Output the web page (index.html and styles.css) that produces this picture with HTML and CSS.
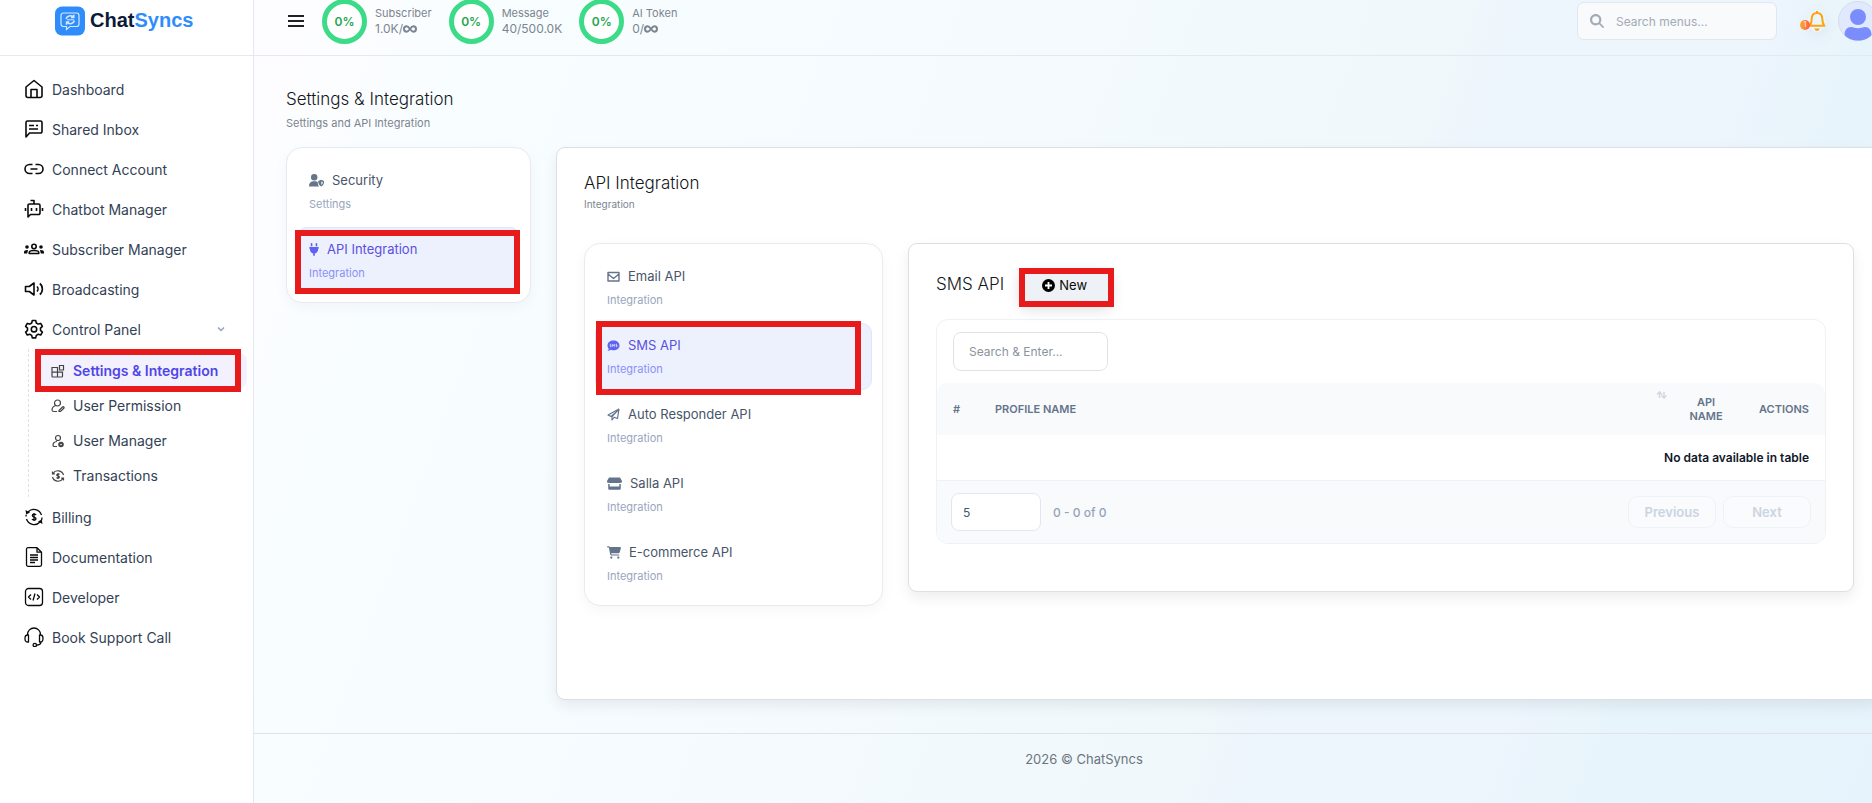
FILE: index.html
```html
<!DOCTYPE html>
<html lang="en">

<head>
    <meta charset="UTF-8">
    <meta name="viewport" content="width=device-width, initial-scale=1.0">
    <title>Settings &amp; Integration - ChatSyncs</title>
    <link rel="stylesheet" href="styles.css">
</head>

<body>
    <div class="app">
        <aside class="sidebar">
            <a class="brand" href="#">
                <svg class="brand-icon" viewBox="0 0 30 30">
                    <rect x="0" y="0.500" width="30" height="29" rx="7" fill="#2f8dfb" />
                    <path d="M8.500 7h13a2.500 2.500 0 0 1 2.500 2.500v8.500a2.500 2.500 0 0 1-2.500 2.500H15l-3.500 3v-3H8.500A2.500 2.500 0 0 1 6 18V9.500A2.500 2.500 0 0 1 8.500 7z" fill="none" stroke="#d4e8ff" stroke-width="1.200" />
                    <path d="M11 13a4.500 4 0 0 1 7.500-2M18.800 8.800v2.700H16M19.500 14.500a4.500 4 0 0 1-7.500 2M11.500 18.700V16h2.800" fill="none" stroke="#d4e8ff" stroke-width="1.500" />
                    <path d="M12 13.800h7" stroke="#d4e8ff" stroke-width="1" />
                </svg>
                <span class="brand-name">Chat<span class="brand-accent">Syncs</span></span>
            </a>
            <nav class="menu">
                <a class="menu-item" href="#">
                    <svg class="menu-icon" viewBox="0 0 20 20"><path d="M2 8l8-6.500L18 8v8.500a2 2 0 0 1-2 2H4a2 2 0 0 1-2-2zM7 18.500v-8h6v8" /></svg>
                    Dashboard
                </a>
                <a class="menu-item" href="#">
                    <svg class="menu-icon" viewBox="0 0 20 20"><path d="M2 18V3.500A1.500 1.500 0 0 1 3.500 2h13A1.500 1.500 0 0 1 18 3.500v9a1.500 1.500 0 0 1-1.500 1.500H5.500zM5 6.500h5M5 10h9M12 6.500h2" /></svg>
                    Shared Inbox
                </a>
                <a class="menu-item" href="#">
                    <svg class="menu-icon" viewBox="0 0 20 20"><path d="M8.500 14.500h-3a4.500 4.500 0 0 1 0-9h3M11.500 5.500h3a4.500 4.500 0 0 1 0 9h-3M6.500 10h7" /></svg>
                    Connect Account
                </a>
                <a class="menu-item" href="#">
                    <svg class="menu-icon" viewBox="0 0 20 20"><path d="M4 18V6.500A1.500 1.500 0 0 1 5.500 5h9A1.500 1.500 0 0 1 16 6.500V14a1.500 1.500 0 0 1-1.500 1.500H6.500zM10 5V1.500H6.500M1.500 9v3M18.500 9v3M7.500 9v3M12.500 9v3" /></svg>
                    Chatbot Manager
                </a>
                <a class="menu-item" href="#">
                    <svg class="menu-icon" viewBox="0 0 20 20">
                        <g class="fill"><circle cx="3" cy="8" r="1.800" /><circle cx="17" cy="8" r="1.800" /><path d="M0 14.500v-1.500c0-1.500 2-2.300 4-2l-.8 3.500zM20 14.500v-1.500c0-1.500-2-2.300-4-2l.8 3.500z" /></g>
                        <circle cx="10" cy="7.500" r="2.200" /><path d="M5.200 14.500v-.8c0-3 9.600-3 9.600 0v.8z" />
                    </svg>
                    Subscriber Manager
                </a>
                <a class="menu-item" href="#">
                    <svg class="menu-icon" viewBox="0 0 20 20"><path d="M1.500 7.500h3.800L10 4v12l-4.700-3.500H1.500zM13 7.500c1.300 1.300 1.300 3.700 0 5M15.800 4.500c3.400 2.500 3.400 8.500 0 11" /></svg>
                    Broadcasting
                </a>
                <a class="menu-item" href="#">
                    <svg class="menu-icon" viewBox="0 0 20 20"><path d="M8.300 1.500h3.400l.6 2.500 1.900 1.100 2.500-.7 1.700 2.900-1.900 1.800v2.200l1.900 1.800-1.700 2.900-2.500-.7-1.900 1.100-.6 2.500H8.300l-.6-2.500-1.900-1.100-2.500.7-1.700-2.900 1.900-1.800V9.100L1.600 7.300l1.700-2.900 2.500.7L7.700 4z" /><circle cx="10" cy="10.200" r="2.700" /></svg>
                    Control Panel
                    <svg class="chevron" viewBox="0 0 8 6"><path d="M1 1.500l3 3 3-3" /></svg>
                </a>
                <div class="submenu">
                    <a class="submenu-item active" href="#">
                        <svg class="submenu-icon" viewBox="0 0 14 14"><path d="M1 3.500h5.500V13H1.800A.8.8 0 0 1 1 12.200zM1 8.200h10.500v4a.8.800 0 0 1-.8.800H6.500M8.500 1.500h4V6h-4z" /></svg>
                        Settings &amp; Integration
                        <span class="mark mark-menu"></span>
                    </a>
                    <a class="submenu-item" href="#">
                        <svg class="submenu-icon" viewBox="0 0 14 14"><circle cx="6.500" cy="4" r="3" /><path d="M4.500 6.500c-2 .8-3.500 2.500-3.500 4.500 0 1 1 1.500 2 1.500h3M8 11.500l3.500-3.500c1-.8 2 .3 1.300 1.300L9.500 12.500H8z" /></svg>
                        User Permission
                    </a>
                    <a class="submenu-item" href="#">
                        <svg class="submenu-icon" viewBox="0 0 14 14"><circle cx="7" cy="4" r="2.500" /><path d="M6 7.500c-2.500.3-4 1.800-4 3.700 0 .8.800 1.300 1.500 1.300H6" /><circle cx="10" cy="10.500" r="1.800" stroke-width="2" /></svg>
                        User Manager
                    </a>
                    <a class="submenu-item" href="#">
                        <svg class="submenu-icon" viewBox="0 0 14 14"><path d="M2 4.500A5.800 5.800 0 0 1 12.500 6M12 9.500A5.800 5.800 0 0 1 1.500 8M1.500 2.500v2.300h2.300M12.500 11.500V9.200h-2.300M8.500 5.500C7.500 4.500 5.500 5 5.700 6.200s2.700.6 2.700 1.900-2 1.500-3 .5M7 4v6" /></svg>
                        Transactions
                    </a>
                </div>
                <a class="menu-item" href="#">
                    <svg class="menu-icon thin" viewBox="0 0 20 20"><path d="M4 5A8 8 0 0 1 17.500 8M18 10.500a8 8 0 0 1-.7 3M16 15A8 8 0 0 1 2.500 12M2 9.500a8 8 0 0 1 .3-1.700M12 8c-.6-1.200-3.700-1.200-3.700.5S12 10 12 11.700s-3.200 1.800-4 .3M10 6v8" /><path class="fill" d="M1.500 3l.7 4.500L6 5.500zM18.500 17l-.7-4.500-3.800 2z" /></svg>
                    Billing
                </a>
                <a class="menu-item" href="#">
                    <svg class="menu-icon thin" viewBox="0 0 20 20"><path d="M13 .7H4A1.500 1.500 0 0 0 2.500 2.200v15.600A1.500 1.500 0 0 0 4 19.300h12a1.500 1.500 0 0 0 1.500-1.500V5.200zM13 .7v4.500h4.500M6 8h8M6 10.500h8M6 13h8M6 15.500h5" /></svg>
                    Documentation
                </a>
                <a class="menu-item" href="#">
                    <svg class="menu-icon thin" viewBox="0 0 20 20"><rect x="1.500" y="1.500" width="17" height="17" rx="3" /><path d="M7 7.500L4.500 10 7 12.500M13 7.500l2.500 2.500-2.500 2.500M11 6.500L9 13.500" /></svg>
                    Developer
                </a>
                <a class="menu-item" href="#">
                    <svg class="menu-icon thin" viewBox="0 0 20 20"><path d="M3.500 8V7.500a6.500 6.500 0 0 1 13 0V8M4.500 8v7H3.500C1.500 15 1 13.500 1 11.500S1.500 8 3.500 8zM15.500 8v7h1c2 0 2.500-1.500 2.500-3.500S18.500 8 16.500 8zM17 15c0 2.300-1.500 3-4.500 3" /><circle cx="10.800" cy="18" r="1.700" /></svg>
                    Book Support Call
                </a>
            </nav>
        </aside>

        <div class="page">
            <header class="topbar">
                <button class="hamburger" type="button" aria-label="Toggle menu"><span></span><span></span><span></span></button>
                <div class="stats">
                    <div class="stat">
                        <div class="ring">0%</div>
                        <div class="stat-text">Subscriber<br><span class="stat-value">1.0K/<svg class="infinity" viewBox="0 0 14 8"><path d="M7 4C5.500 2 4.800 1.300 3.700 1.300a2.700 2.700 0 0 0 0 5.400C4.800 6.700 5.500 6 7 4s2.200-2.700 3.300-2.700a2.700 2.700 0 0 1 0 5.400C9.200 6.700 8.500 6 7 4z" /></svg></span></div>
                    </div>
                    <div class="stat">
                        <div class="ring">0%</div>
                        <div class="stat-text">Message<br><span class="stat-value">40/500.0K</span></div>
                    </div>
                    <div class="stat">
                        <div class="ring">0%</div>
                        <div class="stat-text">AI Token<br><span class="stat-value">0/<svg class="infinity" viewBox="0 0 14 8"><path d="M7 4C5.500 2 4.800 1.300 3.700 1.300a2.700 2.700 0 0 0 0 5.400C4.800 6.700 5.500 6 7 4s2.200-2.700 3.300-2.700a2.700 2.700 0 0 1 0 5.400C9.200 6.700 8.500 6 7 4z" /></svg></span></div>
                    </div>
                </div>
                <label class="menu-search">
                    <svg viewBox="0 0 512 512"><path d="M416 208c0 45.900-14.900 88.300-40 122.700L502.600 457.400c12.500 12.500 12.500 32.800 0 45.300s-32.800 12.500-45.300 0L330.700 376c-34.400 25.200-76.800 40-122.700 40C93.100 416 0 322.900 0 208S93.100 0 208 0S416 93.100 416 208zM208 336a128 128 0 1 0 0-256 128 128 0 1 0 0 256z" /></svg>
                    <input type="text" placeholder="Search menus..." aria-label="Search menus">
                </label>
                <button class="bell" type="button" aria-label="Notifications">
                    <svg viewBox="0 0 18 22"><path d="M9 3c-3.500 0-5.300 2.500-5.300 6 0 3.500-.7 5-2 6.800h14.600c-1.300-1.800-2-3.300-2-6.800 0-3.500-1.800-6-5.300-6zM9 3V1" fill="none" stroke="#ffa40b" stroke-width="2" stroke-linejoin="round" /><path d="M6.500 18.500h5a2.500 2.500 0 0 1-5 0z" fill="#ffa40b" /></svg>
                    <span class="bell-count">1</span>
                </button>
                <svg class="avatar" viewBox="0 0 40 40">
                    <circle cx="20" cy="20" r="19.500" fill="#e0e9fe" stroke="#d5dce8" />
                    <circle cx="20" cy="16" r="8" fill="#7b8dfd" />
                    <path d="M6.500 34c0-5 2.500-8 6.500-8 2.500 0 4 1.300 7 1.300s4.500-1.300 7-1.300c4 0 6.500 3 6.500 8-3.500 4-8 5.500-13.500 5.500S10 38 6.500 34z" fill="#7b8dfd" />
                </svg>
            </header>

            <main class="content">
                <h1 class="title">Settings &amp; Integration</h1>
                <p class="subtitle">Settings and API Integration</p>

                <div class="columns">
                    <div class="tabs">
                        <a class="tab" href="#">
                            <span class="tab-title">
                                <svg class="tab-icon wide" viewBox="0 0 15 13"><circle cx="5.200" cy="3.200" r="3.200" /><path d="M0 12.500c0-3 1.500-5.200 4-5.200h2.500c1 0 1.800.4 2.300 1 0 1.700.3 3 1.200 4.200zM12.200 5.800l3 1.200c0 2.500-.8 4.300-3 5.500-2.200-1.200-3-3-3-5.500z" /><path d="M12.300 7.500l1.500.6c0 1.300-.5 2.200-1.500 2.900z" fill="#fff" /></svg>
                                Security
                            </span>
                            <span class="tab-sub">Settings</span>
                        </a>
                        <a class="tab active" href="#">
                            <span class="tab-title">
                                <svg class="tab-icon narrow" viewBox="0 0 384 512"><path d="M96 0C78.300 0 64 14.300 64 32v96h64V32c0-17.700-14.300-32-32-32zM288 0c-17.700 0-32 14.300-32 32v96h64V32c0-17.700-14.300-32-32-32zM32 160c-17.700 0-32 14.300-32 32s14.300 32 32 32v32c0 77.400 55 142 128 156.800V480c0 17.700 14.300 32 32 32s32-14.300 32-32V412.800C297 398 352 333.400 352 256V224c17.700 0 32-14.300 32-32s-14.300-32-32-32H32z" /></svg>
                                API Integration
                            </span>
                            <span class="tab-sub">Integration</span>
                            <span class="mark mark-tab"></span>
                        </a>
                    </div>

                    <section class="card panel">
                        <h2 class="title">API Integration</h2>
                        <p class="subtitle small">Integration</p>

                        <div class="columns">
                            <div class="tabs tabs-wide">
                                <a class="tab" href="#">
                                    <span class="tab-title">
                                        <svg class="tab-icon" viewBox="0 0 13 13"><path d="M1 2.500h11v8.500H1zM1 4l5.500 4.500L12 4" fill="none" stroke="#64748b" stroke-width="1.400" stroke-linejoin="round" /></svg>
                                        Email API
                                    </span>
                                    <span class="tab-sub">Integration</span>
                                </a>
                                <a class="tab active" href="#">
                                    <span class="tab-title">
                                        <svg class="tab-icon" viewBox="0 0 13 13"><path d="M6.500 1.500c3.400 0 6 2.100 6 4.900s-2.600 4.900-6 4.900c-1 0-1.800-.1-2.600-.5-.9.700-2 1.100-3.400 1.200.7-.7 1.100-1.400 1.300-2.200C1 8.900.5 7.700.5 6.400c0-2.800 2.600-4.900 6-4.900z" /><path d="M4.300 5.300H3.200v1.200h1v1.200H3M5.600 7.800V5.300l.9 1.500.9-1.500v2.500M10 5.300H9v1.200h1v1.200H8.800" fill="none" stroke="#fff" stroke-width=".6" /></svg>
                                        SMS API
                                    </span>
                                    <span class="tab-sub">Integration</span>
                                    <span class="mark mark-sms"></span>
                                </a>
                                <a class="tab" href="#">
                                    <span class="tab-title">
                                        <svg class="tab-icon" viewBox="0 0 13 13"><path d="M12 1L1 7l3 1.500L10.500 3M12 1l-1.500 9.500-4-1.500M12 1L5 8.700V12l2-2.500" fill="none" stroke="#64748b" stroke-width="1.200" stroke-linejoin="round" /></svg>
                                        Auto Responder API
                                    </span>
                                    <span class="tab-sub">Integration</span>
                                </a>
                                <a class="tab" href="#">
                                    <span class="tab-title">
                                        <svg class="tab-icon wide" viewBox="0 0 15 13"><path d="M2 .5h11l2 3.500c.3 1.300-.8 2-1.700 2H1.700C.8 6-.3 5.300 0 4zM1.200 7h1.500v2.500h9.600V7h1.500v4.500a1.200 1.200 0 0 1-1.200 1.200H2.400a1.200 1.200 0 0 1-1.200-1.200z" /></svg>
                                        Salla API
                                    </span>
                                    <span class="tab-sub">Integration</span>
                                </a>
                                <a class="tab" href="#">
                                    <span class="tab-title">
                                        <svg class="tab-icon cart" viewBox="0 0 576 512"><path d="M0 24C0 10.700 10.700 0 24 0H69.500c22 0 41.500 12.800 50.600 32h411c26.300 0 45.500 25 38.600 50.400l-41 152.300c-8.500 31.400-37 53.300-69.500 53.300H170.700l5.400 28.500c2.200 11.300 12.100 19.500 23.600 19.500H488c13.300 0 24 10.700 24 24s-10.700 24-24 24H199.700c-34.600 0-64.300-24.600-70.700-58.500L77.400 54.500c-.7-3.800-4-6.500-7.900-6.500H24C10.700 48 0 37.300 0 24zM128 464a48 48 0 1 1 96 0 48 48 0 1 1 -96 0zm336-48a48 48 0 1 1 0 96 48 48 0 1 1 0-96z" /></svg>
                                        E-commerce API
                                    </span>
                                    <span class="tab-sub">Integration</span>
                                </a>
                            </div>

                            <section class="card sms">
                                <div class="sms-head">
                                    <h3 class="title">SMS API</h3>
                                    <button class="btn-new" type="button">
                                        <svg viewBox="0 0 13 13"><circle cx="6.500" cy="6.500" r="6.500" /><path d="M6.500 3v7M3 6.500h7" stroke="#fff" stroke-width="1.800" /></svg>
                                        New
                                        <span class="mark mark-new"></span>
                                    </button>
                                </div>
                                <div class="table-box">
                                    <div class="table-tools">
                                        <input class="table-search" type="text" placeholder="Search &amp; Enter..." aria-label="Search and enter">
                                    </div>
                                    <table class="table">
                                        <thead>
                                            <tr>
                                                <th class="col-num">#</th>
                                                <th class="col-name">Profile Name
                                                    <svg class="sort" viewBox="0 0 11 8"><path d="M1 3.500L3.500 1v6M3.500 1L6 3.500M5.500 4.500L8 7V1M8 7l2.500-2.500" /></svg>
                                                </th>
                                                <th class="col-api">API Name</th>
                                                <th class="col-actions">Actions</th>
                                            </tr>
                                        </thead>
                                        <tbody>
                                            <tr>
                                                <td colspan="4">No data available in table</td>
                                            </tr>
                                        </tbody>
                                    </table>
                                    <div class="table-foot">
                                        <select class="page-size" aria-label="Rows per page">
                                            <option>5</option>
                                            <option>10</option>
                                            <option>25</option>
                                        </select>
                                        <span class="range">0 - 0 of 0</span>
                                        <button class="pager" type="button" disabled>Previous</button>
                                        <button class="pager" type="button" disabled>Next</button>
                                    </div>
                                </div>
                            </section>
                        </div>
                    </section>
                </div>
            </main>

            <footer class="footer">2026 © ChatSyncs</footer>
        </div>
    </div>
</body>

</html>
```
FILE: styles.css
```css
* {
    box-sizing: border-box;
}

body {
    margin: 0;
    font-family: Inter, "Open Sans", sans-serif;
    font-size: 14px;
    color: #212529;
    overflow: hidden;
}

a {
    color: inherit;
    text-decoration: none;
}

button,
input,
select {
    font-family: inherit;
}

h1,
h2,
h3,
p {
    margin: 0;
}

/* the page is a little wider than the window */
.app {
    display: flex;
    width: calc(100% + 42px);
    min-height: 100vh;
    background: linear-gradient(110deg, #fdfdff 14%, #f8fdff 22%, #f6fbff 40%, #f0f8fb 66%, #edf5fd 70%, #edf5fd 80%, #e8f4fb 85%, #e6f3fc 100%);
}

/* sidebar */
.sidebar {
    flex: 0 0 254px;
    background: #fff;
    border-right: 1px solid #e5e9ef;
}

.brand {
    display: flex;
    align-items: center;
    gap: 5px;
    height: 56px;
    padding: 0 0 14px 55px;
    border-bottom: 1px solid #e5e9ef;
}

.brand-icon {
    width: 30px;
    height: 30px;
}

.brand-name {
    font-family: "Liberation Sans", sans-serif;
    font-size: 20px;
    font-weight: bold;
    color: #0b1a38;
}

.brand-accent {
    color: #2f8dfb;
}

.menu {
    padding-top: 13px;
}

.menu-item {
    display: flex;
    align-items: center;
    gap: 8px;
    height: 40px;
    padding: 0 28px 0 24px;
    color: #334155;
}

.menu-icon {
    width: 20px;
    height: 20px;
    fill: none;
    stroke: #0a0a0a;
    stroke-width: 1.6;
    stroke-linejoin: round;
}

.menu-icon.thin {
    stroke-width: 1.3;
}

.menu-icon .fill {
    fill: #0a0a0a;
    stroke: none;
}

.chevron {
    width: 8px;
    height: 6px;
    margin-left: auto;
    fill: none;
    stroke: #94a3b8;
    stroke-width: 1.5;
}

.submenu {
    margin-left: 28px;
    padding: 4px 6px 4px 8px;
    border-left: 1px dashed #dbe2ea;
}

.submenu-item {
    position: relative;
    display: flex;
    align-items: center;
    gap: 8px;
    height: 35px;
    padding-left: 14px;
    border-radius: 8px;
    color: #334155;
}

.submenu-item.active {
    background: #f4f1fe;
    color: #4f46e5;
    font-weight: 600;
}

.submenu-icon {
    width: 14px;
    height: 14px;
    fill: none;
    stroke: #444;
    stroke-width: 1.2;
}

/* red highlight frames */
.mark {
    position: absolute;
    border: 6px solid #e71b1b;
    pointer-events: none;
}

.mark-menu {
    inset: -4px 6px -4px -2px;
}

.mark-tab {
    inset: 2px -1px -1px -3px;
}

.mark-sms {
    inset: -3px 10px -6px 0;
}

.mark-new {
    inset: 0 -2px -1px 0;
}

/* top bar */
.page {
    flex: 1;
    min-width: 0;
    display: flex;
    flex-direction: column;
}

.topbar {
    display: flex;
    align-items: center;
    height: 56px;
    padding: 0 36px 13px 34px;
    border-bottom: 1px solid #e3e9f0;
}

.hamburger {
    display: flex;
    flex-direction: column;
    gap: 3px;
    width: 16px;
    padding: 0;
    border: 0;
    background: none;
}

.hamburger span {
    height: 2px;
    background: #222;
}

.stats {
    display: flex;
    gap: 17px;
    margin-left: 18px;
}

.stat {
    display: flex;
    align-items: center;
    gap: 8px;
}

.ring {
    display: flex;
    align-items: center;
    justify-content: center;
    width: 45px;
    height: 45px;
    border: 5px solid #3bdb87;
    border-radius: 50%;
    background: #fff;
    color: #22a652;
    font-size: 12px;
    font-weight: 600;
}

.stat-text {
    font-size: 11px;
    line-height: 16px;
    color: #7c858f;
}

.stat-value {
    font-size: 12px;
}

.infinity {
    width: 14px;
    height: 8px;
    fill: none;
    stroke: #7c858f;
    stroke-width: 2;
}

.menu-search {
    display: flex;
    align-items: center;
    gap: 12px;
    width: 200px;
    height: 38px;
    margin-left: auto;
    padding: 0 12px;
    border: 1px solid #e1e6f0;
    border-radius: 7px;
    background: #f8fafc;
}

.menu-search svg {
    flex: none;
    width: 14px;
    height: 14px;
    fill: #a3abb7;
}

.menu-search input {
    width: 100%;
    padding: 0;
    border: 0;
    outline: none;
    background: none;
    font-size: 12px;
    color: #334155;
}

.menu-search input::placeholder {
    color: #a3abb7;
}

.bell {
    position: relative;
    width: 18px;
    height: 22px;
    margin: 0 12px 0 31px;
    padding: 0;
    border: 0;
    border-radius: 50%;
    background: none;
    box-shadow: 0 4px 14px rgba(100, 116, 139, 0.1);
}

.bell svg {
    width: 18px;
    height: 22px;
}

.bell-count {
    position: absolute;
    left: -8px;
    bottom: 2px;
    width: 10px;
    height: 10px;
    border-radius: 50%;
    background: linear-gradient(90deg, #f9ad2b, #fd5b4c);
    color: #fff;
    font-size: 7px;
    line-height: 10px;
}

.avatar {
    flex: none;
    width: 40px;
    height: 40px;
}

/* content */
.content {
    flex: 1;
    padding: 32px 32px 33px;
}

.title {
    font-size: 17px;
    font-weight: 300;
    line-height: 22px;
    color: #14171b;
}

.subtitle {
    margin-top: 5px;
    font-size: 11px;
    line-height: 16px;
    color: #7c858f;
}

.subtitle.small {
    margin-top: 2px;
    font-size: 10px;
}

.columns {
    display: flex;
    align-items: flex-start;
    gap: 25px;
    margin-top: 16px;
}

.panel .columns {
    margin-top: 31px;
}

.tabs {
    flex: 0 0 245px;
    display: flex;
    flex-direction: column;
    gap: 2px;
    padding: 10px 10px 8px;
    border: 1px solid #e7ebf1;
    border-radius: 16px;
    background: #fff;
    box-shadow: 0 4px 14px rgba(15, 23, 42, 0.04);
}

.tabs-wide {
    flex-basis: 299px;
}

.tab {
    position: relative;
    height: 67px;
    padding: 12px 11px;
    border: 1px solid transparent;
    border-radius: 10px;
    color: #475569;
}

.tab.active {
    border-color: #e0e5fd;
    background: #edf1fe;
    color: #5a4fe0;
}

.tab-title {
    display: flex;
    align-items: center;
    gap: 8px;
    font-size: 13px;
    line-height: 18px;
}

.tab-icon {
    width: 13px;
    height: 13px;
    fill: #64748b;
}

.tab-icon.wide {
    width: 15px;
}

.tab-icon.cart {
    width: 14px;
}

.tab-icon.narrow {
    width: 10px;
}

.active .tab-icon {
    fill: #5f63ee;
}

.tab-sub {
    display: block;
    margin-top: 7px;
    font-size: 11px;
    line-height: 16px;
    color: #9aa5bd;
}

.active .tab-sub {
    color: #8b90f7;
}

.card {
    flex: 1;
    min-width: 0;
    padding: 24px 27px;
    border: 1px solid #dcdfe5;
    border-radius: 9px;
    background: #fff;
    box-shadow: 0 6px 14px rgba(0, 0, 0, 0.07);
}

.panel {
    min-height: 553px;
}

.sms {
    min-height: 349px;
}

.sms-head {
    display: flex;
    align-items: flex-start;
    gap: 15px;
    margin-bottom: 13px;
}

.sms-head .title {
    line-height: 32px;
}

.btn-new {
    position: relative;
    display: flex;
    align-items: center;
    justify-content: center;
    gap: 4px;
    width: 93px;
    height: 38px;
    padding: 0 2px 4px 0;
    border: 0;
    border-radius: 8px;
    background: #eef1f5;
    box-shadow: 0 4px 14px rgba(0, 0, 0, 0.12);
    font-size: 13px;
    color: #0a0a0a;
}

.btn-new svg {
    width: 13px;
    height: 13px;
}

.table-box {
    border: 1px solid #eef1f5;
    border-radius: 12px;
    overflow: hidden;
}

.table-tools {
    padding: 12px 16px;
}

.table-search {
    display: block;
    width: 155px;
    height: 39px;
    padding: 0 15px;
    border: 1px solid #dfe3e9;
    border-radius: 8px;
    background: #fff;
    font-size: 12px;
}

.table-search::placeholder {
    color: #8b949e;
}

.table {
    width: 100%;
    border-collapse: separate;
    border-spacing: 0;
}

.table th {
    position: relative;
    height: 52px;
    padding: 0 16px;
    background: #f9fafc;
    color: #64748b;
    font-size: 11px;
    font-weight: 600;
    line-height: 14px;
    text-align: left;
    text-transform: uppercase;
}

.table th:first-child {
    border-top-left-radius: 10px;
}

.table th:last-child {
    border-top-right-radius: 10px;
}

.table .col-num {
    width: 42px;
}

.table .col-api {
    width: 66px;
    text-align: center;
}

.table .col-actions {
    width: 86px;
    text-align: right;
}

.sort {
    position: absolute;
    top: 8px;
    right: 6px;
    width: 11px;
    height: 8px;
    fill: none;
    stroke: #d3d7de;
    stroke-width: 1.5;
}

.table td {
    height: 46px;
    padding: 0 16px;
    border-bottom: 1px solid #eef1f6;
    color: #0f172a;
    font-size: 12px;
    font-weight: 600;
    text-align: right;
}

.table-foot {
    display: flex;
    align-items: center;
    gap: 7px;
    padding: 12px 14px;
    background: #f9fafc;
}

.page-size {
    appearance: none;
    width: 90px;
    height: 38px;
    padding: 0 11px;
    border: 1px solid #e2e7ef;
    border-radius: 8px;
    background: #fff;
    color: #475569;
    font-size: 12px;
}

.range {
    margin: 0 auto 0 5px;
    color: #94a3b8;
    font-size: 12px;
    font-weight: 500;
}

.pager {
    width: 88px;
    height: 32px;
    padding: 0;
    border: 1px solid #eef2f7;
    border-radius: 10px;
    background: #f9fbfd;
    color: #cbd5e1;
    font-size: 13px;
    font-weight: 600;
}

.footer {
    height: 70px;
    padding-top: 16px;
    border-top: 1px solid #dfe2e6;
    color: #6c757d;
    font-size: 13px;
    line-height: 18px;
    text-align: center;
}
```
